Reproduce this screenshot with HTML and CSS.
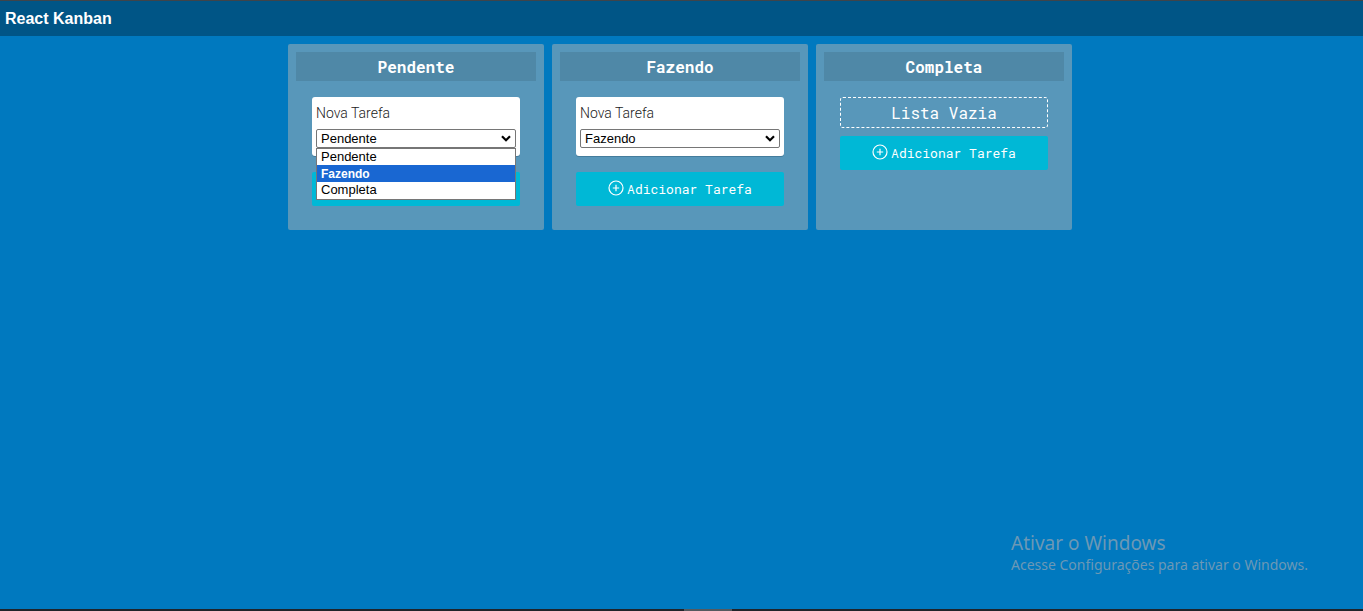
FILE: index.html
```html
<!DOCTYPE html>
<html lang="pt-BR">
<head>
<meta charset="utf-8">
<title>React Kanban</title>
<link rel="stylesheet" href="styles.css">
</head>
<body>
<svg class="defs" aria-hidden="true">
  <symbol id="plus" viewBox="0 0 16 16"><path d="M8 1a7 7 0 1 0 0 14A7 7 0 0 0 8 1M8 4.8v6.4M4.8 8h6.4" fill="none" stroke="currentColor" stroke-width="1.2"/></symbol>
  <symbol id="chevron" viewBox="0 0 10 7"><path d="M1 1.2 5 5.2 9 1.2" fill="none" stroke="currentColor" stroke-width="2.2"/></symbol>
</svg>
<header class="header"><h1 class="title">React Kanban</h1></header>
<main class="board">
  <section class="column">
    <h2 class="column-title">Pendente</h2>
    <div class="list">
      <article class="task">
        <label class="task-name" for="task1">Nova Tarefa</label>
        <div class="picker">
          <select class="select" id="task1"><option selected>Pendente</option><option>Fazendo</option><option>Completa</option></select>
          <svg class="chevron" aria-hidden="true"><use href="#chevron"/></svg>
          <ul class="menu">
            <li class="menu-item">Pendente</li>
            <li class="menu-item active">Fazendo</li>
            <li class="menu-item">Completa</li>
          </ul>
        </div>
      </article>
      <button class="add" type="button" aria-label="Adicionar Tarefa"></button>
    </div>
  </section>
  <section class="column">
    <h2 class="column-title">Fazendo</h2>
    <div class="list">
      <article class="task">
        <label class="task-name" for="task2">Nova Tarefa</label>
        <div class="picker">
          <select class="select" id="task2"><option>Pendente</option><option selected>Fazendo</option><option>Completa</option></select>
          <svg class="chevron" aria-hidden="true"><use href="#chevron"/></svg>
        </div>
      </article>
      <button class="add" type="button"><svg class="plus" aria-hidden="true"><use href="#plus"/></svg><span>Adicionar Tarefa</span></button>
    </div>
  </section>
  <section class="column">
    <h2 class="column-title">Completa</h2>
    <div class="list">
      <div class="empty">Lista Vazia</div>
      <button class="add" type="button"><svg class="plus" aria-hidden="true"><use href="#plus"/></svg><span>Adicionar Tarefa</span></button>
    </div>
  </section>
</main>
<aside class="watermark">
  <p class="watermark-title">Ativar o Windows</p>
  <p class="watermark-text">Acesse Configurações para ativar o Windows.</p>
</aside>
<footer class="taskbar"><span class="taskbar-item"></span></footer>
</body>
</html>
```
FILE: styles.css
```css
* { box-sizing: border-box; margin: 0; }
body {
  min-height: 100vh;
  display: flex;
  flex-direction: column;
  background: #0079bf;
  color: #fff;
  font-family: "Liberation Sans", Arial, sans-serif;
}
.defs { position: absolute; width: 0; height: 0; }
.header {
  padding: 8px 5px;
  border-top: 1px solid #3f444a;
  background: #005586;
}
.title { font-size: 16px; line-height: 19px; }
.board {
  flex: 1;
  display: flex;
  justify-content: center;
  align-items: flex-start;
  gap: 8px;
  padding: 8px 3px 8px 0;
}
.column {
  width: 256px;
  min-height: 186px;
  padding: 8px;
  border-radius: 2px;
  background: #5897ba;
}
.column-title {
  padding: 4px;
  background: #4f88a7;
  font: bold 16px/21px "Roboto Mono", "DejaVu Sans Mono", monospace;
  text-align: center;
}
.list { padding: 16px; }
.task {
  margin-bottom: 16px;
  padding: 8px 4px;
  border-radius: 3px;
  background: #fff;
  box-shadow: 0 1px 0 rgba(9, 45, 66, .25);
}
.task-name {
  display: block;
  margin-bottom: 8px;
  color: #222;
  font: 300 14px/16px Roboto, sans-serif;
}
.picker { position: relative; }
.select {
  display: block;
  appearance: none;
  width: 100%;
  height: 19px;
  padding: 0 4px;
  border: 1px solid #767676;
  border-radius: 2px;
  background: #fff;
  color: #000;
  font: 13px/16px "Liberation Sans", Arial, sans-serif;
}
.chevron {
  position: absolute;
  top: 6px;
  right: 5px;
  width: 10px;
  height: 7px;
  color: #000;
  pointer-events: none;
}
.menu {
  position: absolute;
  top: 100%;
  left: 0;
  right: 0;
  padding: 0 0 1px;
  border: 1px solid #767676;
  background: #fff;
  color: #000;
  list-style: none;
}
.menu-item { padding: 0 4px; font-size: 13px; line-height: 16px; }
.menu-item.active {
  border-top: 1px solid #1967d2;
  background: #1967d2;
  color: #fff;
  font-size: 12px;
  font-weight: bold;
}
.add {
  display: flex;
  align-items: center;
  justify-content: center;
  gap: 3px;
  width: 100%;
  height: 34px;
  border: 0;
  border-radius: 2px;
  background: #00b8d6;
  color: #fff;
  font: 13px/18px "Roboto Mono", "DejaVu Sans Mono", monospace;
}
.plus { width: 16px; height: 16px; margin-bottom: 3px; }
.empty {
  margin-bottom: 8px;
  padding: 4px;
  border: 1px dashed #fff;
  border-radius: 3px;
  font: 16px/21px "Roboto Mono", "DejaVu Sans Mono", monospace;
  text-align: center;
}
.watermark {
  position: absolute;
  right: 55px;
  bottom: 36px;
  color: #6c98b5;
  font-family: "Segoe UI", "Noto Sans", sans-serif;
}
.watermark-title { font-size: 19px; line-height: 24px; }
.watermark-text { font-size: 14px; line-height: 20px; }
.taskbar { display: flex; justify-content: center; padding-left: 52px; background: #20242a; }
.taskbar-item { width: 48px; height: 2px; background: #555a5f; }
```
